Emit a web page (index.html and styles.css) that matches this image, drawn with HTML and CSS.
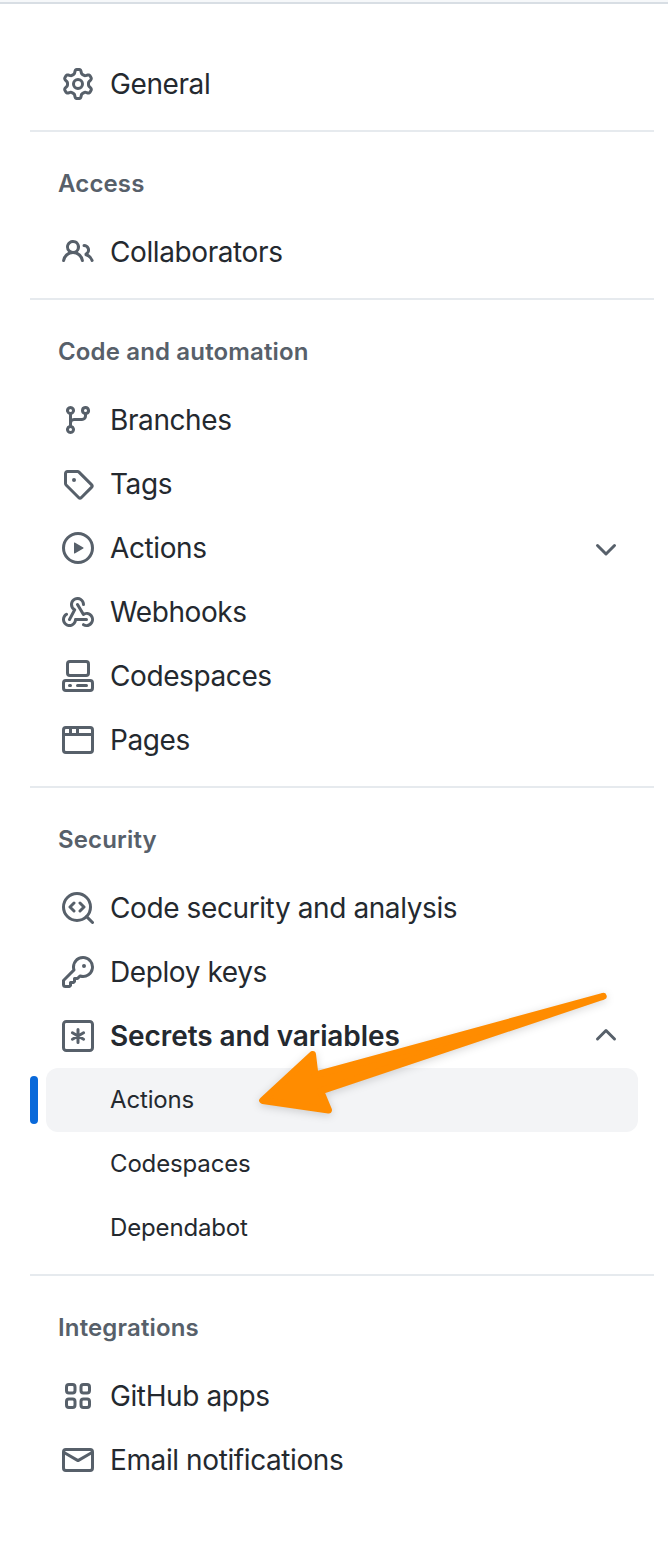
FILE: index.html
```html
<!DOCTYPE html>
<html lang="en">
<head>
<meta charset="utf-8">
<title>Settings</title>
<link rel="stylesheet" href="styles.css">
</head>
<body>
<nav class="sidebar">
  <section class="group">
    <a class="item"><svg class="icon" viewBox="0 0 16 16"><path d="M8 0a8.2 8.2 0 0 1 .701.031C9.444.095 9.99.645 10.16 1.29l.288 1.107c.018.066.079.158.212.224.231.114.454.243.668.386.123.082.233.09.299.071l1.103-.303c.644-.176 1.392.021 1.82.63.27.385.506.792.704 1.218.315.675.111 1.422-.364 1.891l-.814.806c-.049.048-.098.147-.088.294.016.257.016.515 0 .772-.01.147.038.246.088.294l.814.806c.475.469.679 1.216.364 1.891a7.977 7.977 0 0 1-.704 1.217c-.428.61-1.176.807-1.82.63l-1.102-.302c-.067-.019-.177-.011-.3.071a5.909 5.909 0 0 1-.668.386c-.133.066-.194.158-.211.224l-.29 1.106c-.168.646-.715 1.196-1.458 1.26a8.006 8.006 0 0 1-1.402 0c-.743-.064-1.289-.614-1.458-1.26l-.289-1.106c-.018-.066-.079-.158-.212-.224a5.738 5.738 0 0 1-.668-.386c-.123-.082-.233-.09-.299-.071l-1.103.303c-.644.176-1.392-.021-1.82-.63a8.12 8.12 0 0 1-.704-1.218c-.315-.675-.111-1.422.363-1.891l.815-.806c.05-.048.098-.147.088-.294a6.214 6.214 0 0 1 0-.772c.01-.147-.038-.246-.088-.294l-.815-.806C.635 6.045.431 5.298.746 4.623a7.92 7.92 0 0 1 .704-1.217c.428-.61 1.176-.807 1.82-.63l1.102.302c.067.019.177.011.3-.071.214-.143.437-.272.668-.386.133-.066.194-.158.211-.224l.29-1.106C6.009.645 6.556.095 7.299.03 7.53.01 7.764 0 8 0Zm-.571 1.525c-.036.003-.108.036-.137.146l-.289 1.105c-.147.561-.549.967-.998 1.189-.173.086-.34.183-.5.29-.417.278-.97.423-1.529.27l-1.103-.303c-.109-.03-.175.016-.195.045-.22.312-.412.644-.573.99-.014.031-.021.11.059.19l.815.806c.411.406.562.957.53 1.456a4.709 4.709 0 0 0 0 .582c.032.499-.119 1.05-.53 1.456l-.815.806c-.081.08-.073.159-.059.19.162.346.353.677.573.989.02.03.085.076.195.046l1.102-.303c.56-.153 1.113-.008 1.53.27.161.107.328.204.501.29.447.222.85.629.997 1.189l.289 1.105c.029.109.101.143.137.146a6.6 6.6 0 0 0 1.142 0c.036-.003.108-.036.137-.146l.289-1.105c.147-.561.549-.967.998-1.189.173-.086.34-.183.5-.29.417-.278.97-.423 1.529-.27l1.103.303c.109.029.175-.016.195-.045.22-.313.411-.644.573-.99.014-.031.021-.11-.059-.19l-.815-.806c-.411-.406-.562-.957-.53-1.456a4.709 4.709 0 0 0 0-.582c-.032-.499.119-1.05.53-1.456l.815-.806c.081-.08.073-.159.059-.19a6.464 6.464 0 0 0-.573-.989c-.02-.03-.085-.076-.195-.046l-1.102.303c-.56.153-1.113.008-1.53-.27a4.44 4.44 0 0 0-.501-.29c-.447-.222-.85-.629-.997-1.189l-.289-1.105c-.029-.11-.101-.143-.137-.146a6.6 6.6 0 0 0-1.142 0ZM11 8a3 3 0 1 1-6 0 3 3 0 0 1 6 0ZM9.5 8a1.5 1.5 0 1 0-3.001.001A1.5 1.5 0 0 0 9.5 8Z"/></svg><span class="label">General</span></a>
  </section>
  <section class="group">
    <h2 class="heading">Access</h2>
    <a class="item"><svg class="icon" viewBox="0 0 16 16"><path d="M2 5.5a3.5 3.5 0 1 1 5.898 2.549 5.508 5.508 0 0 1 3.034 4.084.75.75 0 1 1-1.482.235 4 4 0 0 0-7.9 0 .75.75 0 0 1-1.482-.236A5.507 5.507 0 0 1 3.102 8.05 3.493 3.493 0 0 1 2 5.5ZM11 4a3.001 3.001 0 0 1 2.22 5.018 5.01 5.01 0 0 1 2.56 3.012.749.749 0 0 1-.885.954.752.752 0 0 1-.549-.514 3.507 3.507 0 0 0-2.522-2.372.75.75 0 0 1-.574-.73v-.352a.75.75 0 0 1 .416-.672A1.5 1.5 0 0 0 11 5.5.75.75 0 0 1 11 4Zm-5.5-.5a2 2 0 1 0-.001 3.999A2 2 0 0 0 5.5 3.5Z"/></svg><span class="label">Collaborators</span></a>
  </section>
  <section class="group">
    <h2 class="heading">Code and automation</h2>
    <a class="item"><svg class="icon" viewBox="0 0 16 16"><path d="M9.5 3.25a2.25 2.25 0 1 1 3 2.122V6A2.5 2.5 0 0 1 10 8.5H6a1 1 0 0 0-1 1v1.128a2.251 2.251 0 1 1-1.5 0V5.372a2.25 2.25 0 1 1 1.5 0v1.836A2.493 2.493 0 0 1 6 7h4a1 1 0 0 0 1-1v-.628A2.25 2.25 0 0 1 9.5 3.25Zm-6 0a.75.75 0 1 0 1.5 0 .75.75 0 0 0-1.5 0Zm8.25-.75a.75.75 0 1 0 0 1.5.75.75 0 0 0 0-1.5ZM4.25 12a.75.75 0 1 0 0 1.5.75.75 0 0 0 0-1.5Z"/></svg><span class="label">Branches</span></a>
    <a class="item"><svg class="icon" viewBox="0 0 16 16"><path d="M1 7.775V2.75C1 1.784 1.784 1 2.75 1h5.025c.464 0 .91.184 1.238.513l6.25 6.25a1.75 1.75 0 0 1 0 2.474l-5.026 5.026a1.75 1.75 0 0 1-2.474 0l-6.25-6.25A1.752 1.752 0 0 1 1 7.775Zm1.5 0c0 .066.026.13.073.177l6.25 6.25a.25.25 0 0 0 .354 0l5.025-5.025a.25.25 0 0 0 0-.354l-6.25-6.25a.25.25 0 0 0-.177-.073H2.75a.25.25 0 0 0-.25.25ZM6 5a1 1 0 1 1 0 2 1 1 0 0 1 0-2Z"/></svg><span class="label">Tags</span></a>
    <a class="item"><svg class="icon" viewBox="0 0 16 16"><path d="M8 0a8 8 0 1 1 0 16A8 8 0 0 1 8 0ZM1.5 8a6.5 6.5 0 1 0 13 0 6.5 6.5 0 0 0-13 0Zm4.879-2.773 4.264 2.559a.25.25 0 0 1 0 .428l-4.264 2.559A.25.25 0 0 1 6 10.559V5.442a.25.25 0 0 1 .379-.215Z"/></svg><span class="label">Actions</span><svg class="icon line chevron" viewBox="0 0 16 16"><path d="M3.75 6.75 8 11l4.25-4.25"/></svg></a>
    <a class="item"><svg class="icon" viewBox="0 0 16 16"><path d="M5.5 4.25a2.25 2.25 0 0 1 4.5 0 .75.75 0 0 0 1.5 0 3.75 3.75 0 1 0-6.14 2.889l-2.272 4.258a.75.75 0 0 0 1.324.706L7 7.25a.75.75 0 0 0-.309-1.015A2.25 2.25 0 0 1 5.5 4.25Z"/><path d="M7.364 3.607a.75.75 0 0 1 1.03.257l2.608 4.349a3.75 3.75 0 1 1-.628 6.785.75.75 0 0 1 .752-1.299 2.25 2.25 0 1 0-.033-3.88.75.75 0 0 1-1.03-.256L7.107 4.636a.75.75 0 0 1 .257-1.03Z"/><path d="M2.9 8.776A.75.75 0 0 1 2.625 9.8 2.25 2.25 0 1 0 6 11.75a.75.75 0 0 1 .75-.751h5.5a.75.75 0 0 1 0 1.5H7.425a3.751 3.751 0 1 1-5.55-3.998.75.75 0 0 1 1.024.274Z"/></svg><span class="label">Webhooks</span></a>
    <a class="item"><svg class="icon line" viewBox="0 0 16 16"><rect x="2.75" y=".75" width="10.5" height="7" rx="1.2"/><rect x=".75" y="10.25" width="14.5" height="5" rx="1.2"/><path d="M3.75 12.75h.5M7.75 12.75h4.5"/></svg><span class="label">Codespaces</span></a>
    <a class="item"><svg class="icon line" viewBox="0 0 16 16"><rect x=".75" y="1.75" width="14.5" height="12.5" rx="1.2"/><path d="M.75 5.25h14.5M4.25 2v3M7.75 2v3"/></svg><span class="label">Pages</span></a>
  </section>
  <section class="group">
    <h2 class="heading">Security</h2>
    <a class="item"><svg class="icon line" viewBox="0 0 16 16"><circle cx="7.5" cy="7.5" r="6.75"/><path d="m12.3 12.3 2.95 2.95M6 5.5l-2 2 2 2M9 5.5l2 2-2 2"/></svg><span class="label">Code security and analysis</span></a>
    <a class="item"><svg class="icon" viewBox="0 0 16 16"><path d="M10.5 0a5.499 5.499 0 1 1-1.288 10.848l-.932.932a.749.749 0 0 1-.53.22H7v.75a.749.749 0 0 1-.22.53l-.5.5a.749.749 0 0 1-.53.22H5v.75a.749.749 0 0 1-.22.53l-.5.5a.749.749 0 0 1-.53.22h-2A1.75 1.75 0 0 1 0 14.25v-2c0-.199.079-.389.22-.53l4.932-4.932A5.5 5.5 0 0 1 10.5 0Zm-4 5.5c-.001.431.069.86.205 1.269a.75.75 0 0 1-.181.768L1.5 12.56v1.69c0 .138.112.25.25.25h1.69l.06-.06v-1.19a.75.75 0 0 1 .75-.75h1.19l.06-.06v-1.19a.75.75 0 0 1 .75-.75h1.19l1.023-1.025a.75.75 0 0 1 .768-.18A4 4 0 1 0 6.5 5.5ZM11 6a1 1 0 1 1 0-2 1 1 0 0 1 0 2Z"/></svg><span class="label">Deploy keys</span></a>
    <a class="item open"><svg class="icon line" viewBox="0 0 16 16"><rect x=".75" y=".75" width="14.5" height="14.5" rx="1.4"/><path d="M8 4.75v6.5M5.2 6.4l5.6 3.2M10.8 6.4 5.2 9.6"/></svg><span class="label">Secrets and variables</span><svg class="icon line chevron" viewBox="0 0 16 16"><path d="M3.75 9.5 8 5.25l4.25 4.25"/></svg></a>
    <a class="subitem selected"><span class="sublabel">Actions</span>
      <svg class="pointer" viewBox="250 985 370 140"><path d="M603.200 996.300 315 1075.200l-2.500-20.700-49.800 46 65.800 9.500-7.900-19Z"/></svg>
    </a>
    <a class="subitem"><span class="sublabel">Codespaces</span></a>
    <a class="subitem"><span class="sublabel">Dependabot</span></a>
  </section>
  <section class="group">
    <h2 class="heading">Integrations</h2>
    <a class="item"><svg class="icon line" viewBox="0 0 16 16"><rect x="2.25" y="2.25" width="4.25" height="4.25" rx="1.2"/><rect x="9.5" y="2.25" width="4.25" height="4.25" rx="1.2"/><rect x="2.25" y="9.5" width="4.25" height="4.25" rx="1.2"/><rect x="9.5" y="9.5" width="4.25" height="4.25" rx="1.2"/></svg><span class="label">GitHub apps</span></a>
    <a class="item"><svg class="icon line" viewBox="0 0 16 16"><rect x=".75" y="2.75" width="14.5" height="10.5" rx="1.2"/><path d="M1 4.250 8 8.300l7-4.050"/></svg><span class="label">Email notifications</span></a>
  </section>
</nav>
</body>
</html>
```
FILE: styles.css
```css
* { box-sizing: border-box; }

body {
  margin: 0;
  height: 1558px;
  background: #fff;
  border-top: 2px solid #f6f8fa;
  color: #24292f;
  font-family: Inter, "Liberation Sans", sans-serif;
}

.sidebar {
  border-top: 2px solid #d8dee4;
  padding: 48px 14px 0 30px;
}

.group {
  padding-bottom: 14px;
  border-bottom: 2px solid #e6eaee;
}

.group:last-child { border-bottom: 0; }

.heading {
  margin: 0;
  height: 88px;
  padding: 36px 28px 0;
  color: #57606a;
  font-size: 24px;
  font-weight: 600;
  line-height: 32px;
  letter-spacing: 0.15px;
}

.item {
  display: flex;
  align-items: center;
  gap: 16px;
  height: 64px;
  padding: 0 32px;
  font-size: 28px;
  letter-spacing: -0.4px;
}

.label { flex: 1; white-space: nowrap; }

.open {
  font-weight: 600;
  letter-spacing: -0.1px;
}

.icon {
  flex: none;
  width: 32px;
  height: 32px;
  fill: #57606a;
}

.line {
  fill: none;
  stroke: #57606a;
  stroke-width: 1.5;
  stroke-linecap: round;
  stroke-linejoin: round;
}

.subitem {
  position: relative;
  display: flex;
  align-items: center;
  height: 64px;
  margin: 0 16px;
  padding-left: 64px;
  border-radius: 12px;
  font-size: 24px;
  letter-spacing: -0.15px;
}

.sublabel { padding-bottom: 2px; }

.selected { background: #f3f4f6; }

.selected::before {
  content: "";
  position: absolute;
  left: -16px;
  top: 8px;
  width: 8px;
  height: 48px;
  border-radius: 4px;
  background: #0969da;
}

/* Callout arrow lying over the menu */
.pointer {
  position: absolute;
  left: 204px;
  top: -83px;
  width: 370px;
  height: 140px;
  fill: #ff8c00;
  stroke: #ff8c00;
  stroke-width: 7;
  stroke-linejoin: round;
  filter: drop-shadow(0 2px 4px rgba(0, 0, 0, .16));
}
```
